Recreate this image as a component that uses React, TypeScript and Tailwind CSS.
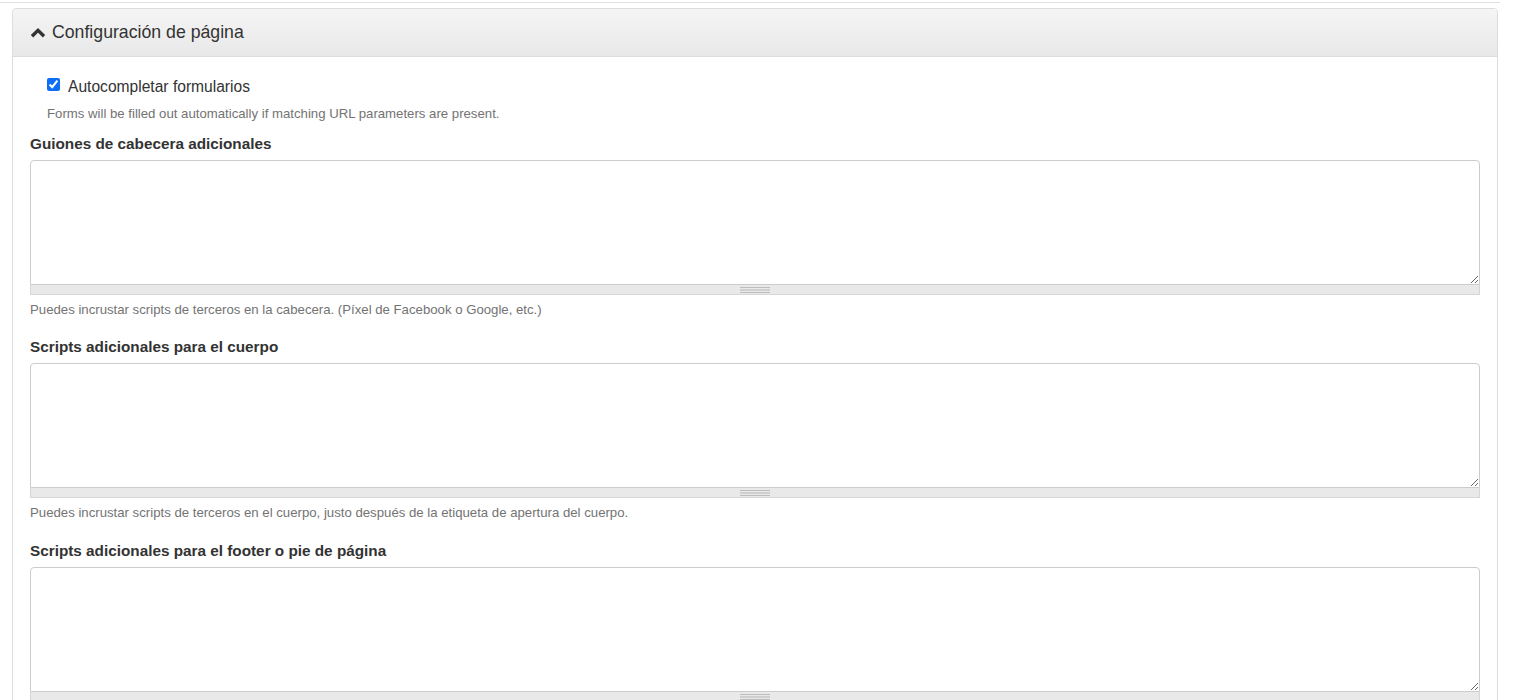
interface ScriptFieldProps {
  label: string;
  help: string;
  className?: string;
}

function ScriptField({ label, help, className = 'mb-[19px]' }: ScriptFieldProps) {
  return (
    <div className={className}>
      <label className="block text-[15.3px] leading-[20px] font-bold text-[#333] mb-[6px]">{label}</label>
      {/* textarea + grip bar */}
      <div>
        <textarea
          className="block w-full h-[125px] rounded-t-[4px] border border-[#ccc] bg-white px-3 py-2 text-[14px] outline-none resize-y"
        />
        <div className="h-[10px] bg-[#e9e9e9] border border-t-0 border-[#d6d6d6] flex items-center justify-center">
          <div className="w-[30px] flex flex-col gap-[1px]">
            <div className="h-[1px] bg-[#bdbdbd]" />
            <div className="h-[2px] bg-[#cfcfcf]" />
            <div className="h-[1px] bg-[#bdbdbd]" />
          </div>
        </div>
      </div>
      <p className="mt-[6px] text-[13.2px] leading-[17px] text-[#737373]">{help}</p>
    </div>
  );
}

export default function App() {
  return (
    <div className="min-h-[700px] bg-white font-['Liberation_Sans',Arial,sans-serif] text-[#333]">
      <div className="w-[1500px] h-[3px] border-b border-[#e0e0e0]" />

      {/* Panel */}
      <div className="ml-[12px] mt-[5px] w-[1486px] border border-[#ddd] rounded-[4px]">
        <div className="h-[48px] flex items-center gap-[6px] pl-[17px] bg-gradient-to-b from-[#f5f5f5] to-[#e8e8e8] border-b border-[#ddd] rounded-t-[4px]">
          <svg viewBox="0 0 16 10" className="w-[16px] h-[10px] text-[#333]" fill="none">
            <polyline points="2,8.2 8,2.4 14,8.2" stroke="currentColor" strokeWidth="3.4" strokeLinejoin="miter" />
          </svg>
          <span className="text-[17.7px] text-[#333]">Configuración de página</span>
        </div>

        <div className="px-[17px] pt-[20px]">
          <div className="pl-[17px]">
            <label className="flex items-center gap-[8px] text-[15.6px] leading-[20px]">
              <input type="checkbox" defaultChecked className="w-[13px] h-[13px] accent-[#0b6ef5] -mt-[5px]" />
              <span className="text-[#333]">Autocompletar formularios</span>
            </label>
            <p className="mt-[8px] text-[13.2px] leading-[17px] text-[#737373]">
              Forms will be filled out automatically if matching URL parameters are present.
            </p>
          </div>

          <div className="mt-[12px]">
            <ScriptField
              label="Guiones de cabecera adicionales"
              help="Puedes incrustar scripts de terceros en la cabecera. (Píxel de Facebook o Google, etc.)"
            />
            <ScriptField
              className="mb-[20px]"
              label="Scripts adicionales para el cuerpo"
              help="Puedes incrustar scripts de terceros en el cuerpo, justo después de la etiqueta de apertura del cuerpo."
            />
            <ScriptField
              label="Scripts adicionales para el footer o pie de página"
              help="Puedes incrustar scripts de terceros en el pie de página, justo antes de la etiqueta de cierre del cuerpo."
            />
          </div>
        </div>
      </div>
    </div>
  );
}
